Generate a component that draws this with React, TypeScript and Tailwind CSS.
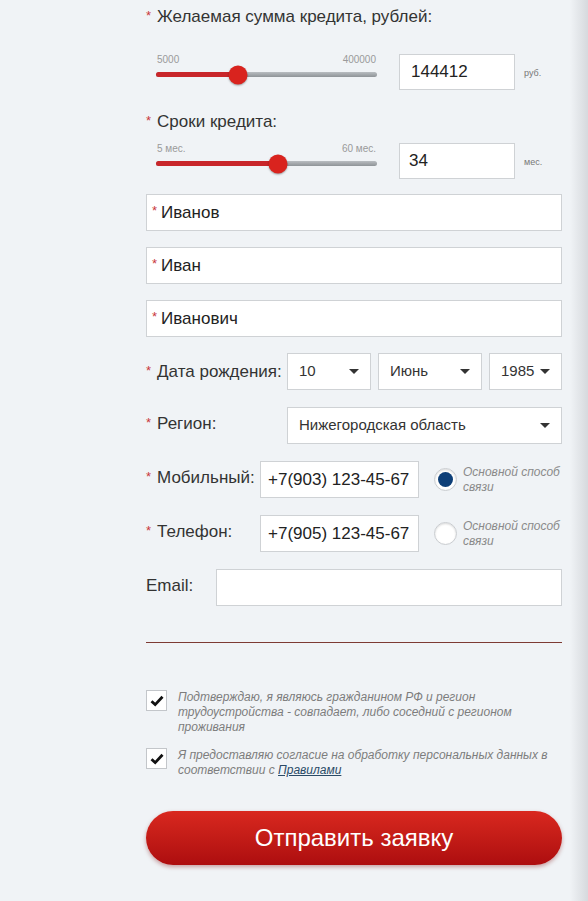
import React from 'react';

const FONT = { fontFamily: '"Liberation Sans", Arial, sans-serif' };

const Star = () => <span className="text-[#c9373a] text-[13px] leading-none mr-[6px] relative -top-[2px]">*</span>;

const Caret = () => (
  <svg width="10" height="5" viewBox="0 0 10 5" className="shrink-0">
    <path d="M0 0 L10 0 L5 5 Z" fill="#333" />
  </svg>
);

const Slider: React.FC<{ min: string; max: string; pct: number }> = ({ min, max, pct }) => (
  <div className="w-[221px] h-[36px] flex flex-col">
    <div className="flex justify-between text-[10px] leading-[12px] text-[#9a9a9a] px-[1px]">
      <span>{min}</span>
      <span>{max}</span>
    </div>
    <div className="relative mt-[6px] h-[5px] rounded-full bg-gradient-to-b from-[#b9bdc1] to-[#8f9498]">
      <div className="absolute left-0 top-0 h-[5px] rounded-full bg-[#c8262a]" style={{ width: pct + '%' }} />
      <div
        className="absolute top-1/2 w-[19px] h-[19px] -translate-x-1/2 -translate-y-1/2 rounded-full bg-[#d9231e] shadow-[0_1px_2px_rgba(0,0,0,0.35)]"
        style={{ left: pct + '%' }}
      />
    </div>
  </div>
);

const TextBox: React.FC<{ value: string }> = ({ value }) => (
  <div className="h-[37px] bg-white border border-[#cfd2d5] flex items-center pl-[5px] text-[17px] text-[#222]">
    <Star />
    <span className="-ml-[2px]">{value}</span>
  </div>
);

const Select: React.FC<{ value: string; w: string }> = ({ value, w }) => (
  <div className={`${w} h-[37px] bg-white border border-[#cfd2d5] flex items-center justify-between pl-[11px] pr-[11px] text-[15px] text-[#333]`}>
    <span>{value}</span>
    <Caret />
  </div>
);

const Radio: React.FC<{ on?: boolean }> = ({ on }) => (
  <div className="w-[23px] h-[23px] rounded-full bg-white border border-[#c9ccd0] shadow-[inset_0_1px_2px_rgba(0,0,0,0.15)] flex items-center justify-center shrink-0">
    {on && <div className="w-[15px] h-[15px] rounded-full bg-[#0e3f78]" />}
  </div>
);

const Check = () => (
  <div className="w-[21px] h-[21px] bg-white border border-[#c3c6ca] flex items-center justify-center shrink-0">
    <svg width="14" height="12" viewBox="0 0 14 12">
      <path d="M1.5 6.2 L5.2 9.6 L12.5 1.8" stroke="#111" strokeWidth="2.8" fill="none" />
    </svg>
  </div>
);

const ContactHint = () => (
  <div className="ml-[6px] text-[12px] leading-[15px] italic text-[#8a8a8a]">
    Основной способ
    <br />
    связи
  </div>
);

export default function App() {
  return (
    <div className="min-h-screen w-full flex bg-[#f0f3f6]" style={FONT}>
      <div className="ml-[146px] w-[416px] flex flex-col text-[#333]">
        <div className="mt-[7px] text-[17px] leading-[20px]">
          <Star />
          Желаемая сумма кредита, рублей:
        </div>
        <div className="mt-[27px] flex items-start">
          <div className="ml-[10px]">
            <Slider min="5000" max="400000" pct={37} />
          </div>
          <div className="ml-[22px] w-[116px] h-[36px] bg-white border border-[#cfd2d5] flex items-center pl-[11px] text-[17px] text-[#222]">
            144412
          </div>
          <span className="ml-[9px] mt-[13px] text-[9px] text-[#777]">руб.</span>
        </div>

        <div className="mt-[22px] text-[17px] leading-[20px]">
          <Star />
          Сроки кредита:
        </div>
        <div className="mt-[11px] flex items-start">
          <div className="ml-[10px]">
            <Slider min="5 мес." max="60 мес." pct={55} />
          </div>
          <div className="ml-[22px] w-[116px] h-[36px] bg-white border border-[#cfd2d5] flex items-center pl-[9px] text-[17px] text-[#222]">
            34
          </div>
          <span className="ml-[9px] mt-[13px] text-[9px] text-[#777]">мес.</span>
        </div>

        <div className="mt-[15px] flex flex-col gap-[16px]">
          <TextBox value="Иванов" />
          <TextBox value="Иван" />
          <TextBox value="Иванович" />
        </div>

        <div className="mt-[16px] flex items-center">
          <div className="w-[142px] text-[17px]">
            <Star />
            Дата рождения:
          </div>
          <div className="flex gap-[7px]">
            <Select value="10" w="w-[84px]" />
            <Select value="Июнь" w="w-[104px]" />
            <Select value="1985" w="w-[73px]" />
          </div>
        </div>

        <div className="mt-[17px] flex items-center">
          <div className="w-[141px] text-[17px] -mt-[3px]">
            <Star />
            Регион:
          </div>
          <Select value="Нижегородская область" w="w-[275px]" />
        </div>

        <div className="mt-[17px] flex items-center">
          <div className="w-[114px] text-[17px] -mt-[3px] whitespace-nowrap">
            <Star />
            Мобильный:
          </div>
          <div className="w-[159px] h-[37px] bg-white border border-[#cfd2d5] flex items-center pl-[7px] text-[17px] text-[#222]">
            +7(903) 123-45-67
          </div>
          <div className="ml-[15px] flex items-center">
            <Radio on />
            <ContactHint />
          </div>
        </div>

        <div className="mt-[17px] flex items-center">
          <div className="w-[114px] text-[17px] -mt-[3px]">
            <Star />
            Телефон:
          </div>
          <div className="w-[159px] h-[37px] bg-white border border-[#cfd2d5] flex items-center pl-[7px] text-[17px] text-[#222]">
            +7(905) 123-45-67
          </div>
          <div className="ml-[15px] flex items-center">
            <Radio />
            <ContactHint />
          </div>
        </div>

        <div className="mt-[17px] flex items-center">
          <div className="w-[70px] text-[17px] -mt-[3px]">Email:</div>
          <div className="w-[346px] h-[37px] bg-white border border-[#cfd2d5]" />
        </div>

        <div className="mt-[36px] h-[1px] bg-[#7d3a33]" />

        <div className="mt-[47px] flex items-start">
          <Check />
          <p className="ml-[11px] w-[380px] text-[12px] leading-[15px] italic text-[#7d7d7d]">
            Подтверждаю, я являюсь гражданином РФ и регион трудоустройства - совпадает, либо соседний с регионом проживания
          </p>
        </div>

        <div className="mt-[13px] flex items-start">
          <Check />
          <p className="ml-[11px] w-[384px] text-[12px] leading-[15px] italic text-[#7d7d7d]">
            Я предоставляю согласие на обработку персональных данных в соответствии с{' '}
            <span className="underline text-[#2a4a66]">Правилами</span>
          </p>
        </div>

        <button className="mt-[33px] h-[54px] w-full rounded-full bg-gradient-to-b from-[#d9281f] to-[#ad0d0f] text-white text-[24px] shadow-[0_2px_4px_rgba(120,0,0,0.35)]">
          Отправить заявку
        </button>
      </div>
      <div className="flex-1 flex justify-end">
        <div className="w-[18px] bg-gradient-to-r from-[#f0f3f6] to-[#d6d9dd]" />
      </div>
    </div>
  );
}
